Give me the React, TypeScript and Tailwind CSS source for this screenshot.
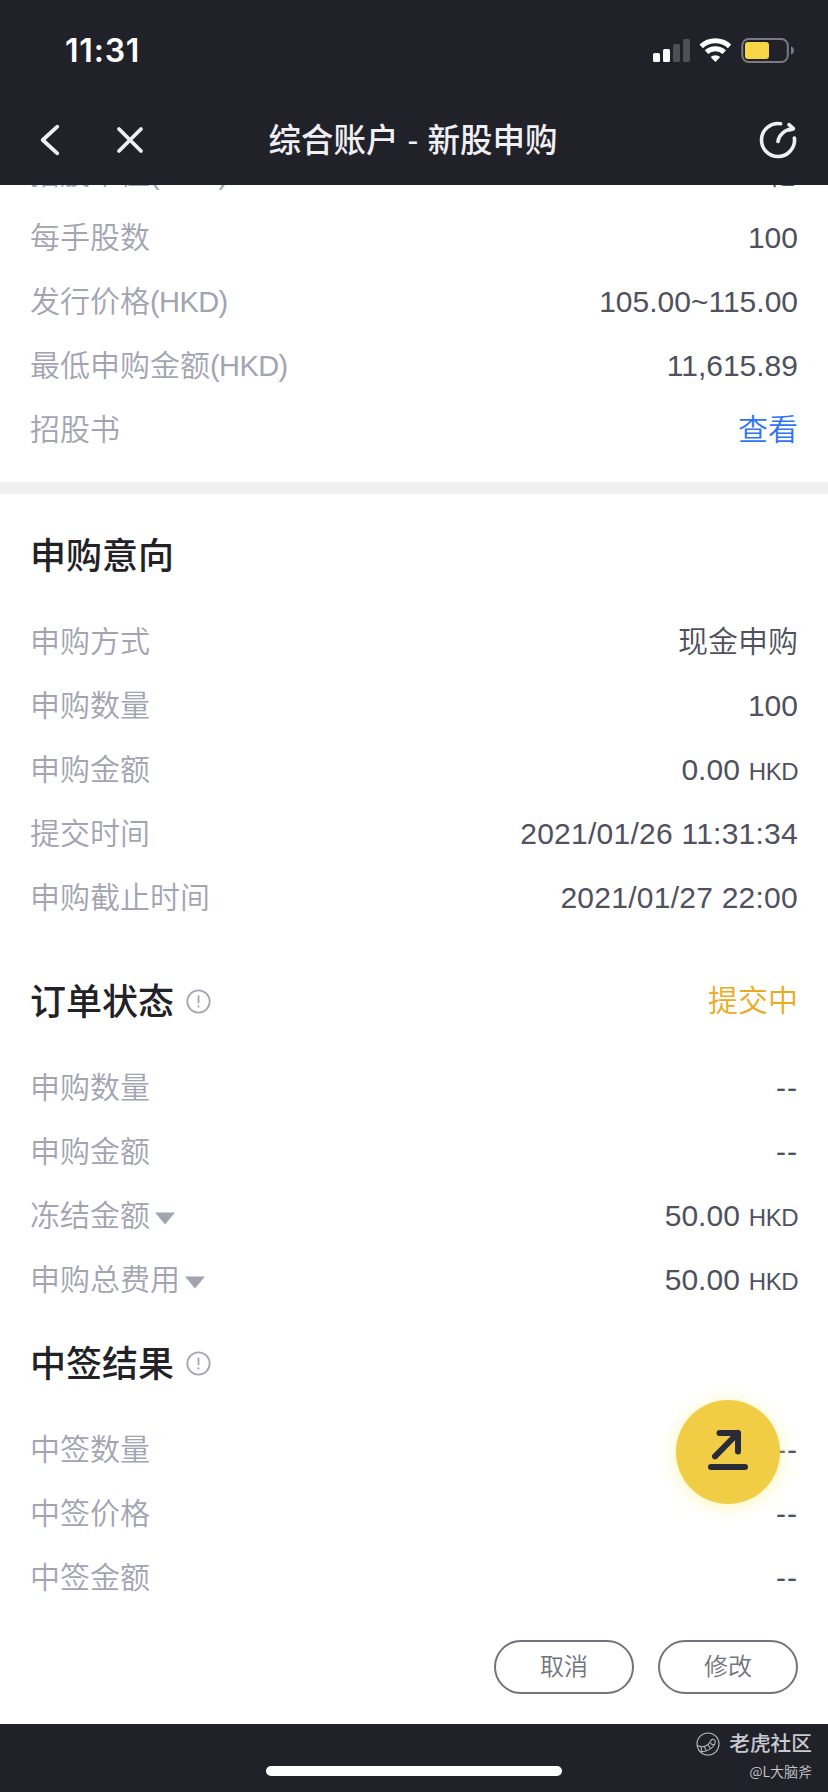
import type { ReactNode } from "react";

type RowData = {
  label: string;
  currency?: string;
  value: string;
  unit?: string;
  kind?: "link" | "date" | "empty" | "money";
  expandable?: boolean;
};

const offerRows: RowData[] = [
  { label: "招股市值", currency: "(HKD)", value: "1.2亿" },
  { label: "每手股数", value: "100" },
  { label: "发行价格", currency: "(HKD)", value: "105.00~115.00" },
  { label: "最低申购金额", currency: "(HKD)", value: "11,615.89" },
  { label: "招股书", value: "查看", kind: "link" },
];

const intentRows: RowData[] = [
  { label: "申购方式", value: "现金申购" },
  { label: "申购数量", value: "100" },
  { label: "申购金额", value: "0.00", unit: "HKD", kind: "money" },
  { label: "提交时间", value: "2021/01/26 11:31:34", kind: "date" },
  { label: "申购截止时间", value: "2021/01/27 22:00", kind: "date" },
];

const orderRows: RowData[] = [
  { label: "申购数量", value: "--", kind: "empty" },
  { label: "申购金额", value: "--", kind: "empty" },
  { label: "冻结金额", value: "50.00", unit: "HKD", kind: "money", expandable: true },
  { label: "申购总费用", value: "50.00", unit: "HKD", kind: "money", expandable: true },
];

const resultRows: RowData[] = [
  { label: "中签数量", value: "--", kind: "empty" },
  { label: "中签价格", value: "--", kind: "empty" },
  { label: "中签金额", value: "--", kind: "empty" },
];

const valueStyles = {
  link: "text-[#2f74f5]",
  date: "text-[#50515e] tracking-[0.25px]",
  empty: "text-[#50515e] tracking-[1px]",
  money: "text-[#50515e] pt-[2px]",
};

function StatusBar() {
  return (
    <div className="flex h-[96px] items-center justify-between pl-[65px] pr-[34px] pt-[3px]">
      <span className="pt-[2px] font-['Inter'] text-[32px] font-semibold leading-none tracking-[0.8px] text-white">
        11:31
      </span>
      <svg width="142" height="26" viewBox="652 36 142 26" fill="none">
        <rect x="653" y="52" width="7" height="9" rx="1.5" fill="#fff" />
        <rect x="663" y="48" width="7" height="13" rx="1.5" fill="#fff" />
        <rect x="673" y="43" width="7" height="18" rx="1.5" fill="#4f4f57" />
        <rect x="683" y="38" width="7" height="23" rx="1.5" fill="#4f4f57" />
        <path
          d="M701.2 45.3A21.2 21.2 0 0 1 729.6 45.3M706.5 51.2A13.3 13.3 0 0 1 724.3 51.2"
          stroke="#fff"
          strokeWidth="5"
        />
        <path d="M715.4 61L710.6 56.1A7 7 0 0 1 720.2 56.1Z" fill="#fff" />
        <rect x="742.3" y="38" width="45.5" height="23" rx="6.5" stroke="#7b7b80" strokeWidth="2" />
        <rect x="745" y="41" width="24" height="17" rx="3" fill="#f7d748" />
        <path d="M791 45.5C795 46.5 795 52.5 791 53.5Z" fill="#7b7b80" />
      </svg>
    </div>
  );
}

function NavBar() {
  return (
    <div className="flex h-[88px] items-center justify-between px-[30px]">
      <div className="flex w-[130px] items-center pl-[8px]">
        <svg width="24" height="34" viewBox="0 0 24 34" fill="none" stroke="#efeff4" strokeWidth="3.8" strokeLinecap="round" strokeLinejoin="round">
          <path d="M19.3 3.7L4.7 17L19.3 30.3" />
        </svg>
        <svg className="ml-[52px]" width="32" height="32" viewBox="0 0 32 32" fill="none" stroke="#efeff4" strokeWidth="3.8" strokeLinecap="round">
          <path d="M5 5L27 27M27 5L5 27" />
        </svg>
      </div>
      <h1 className="mr-[2px] pt-[1px] text-[32.5px] font-medium leading-[44px] text-[#efeff4]">综合账户 - 新股申购</h1>
      <div className="flex w-[130px] justify-end">
        <svg width="40" height="40" viewBox="0 0 40 40" fill="none" stroke="#efeff4" strokeWidth="3.6" strokeLinecap="round" strokeLinejoin="round">
          <path d="M22.6 3.7A16.5 16.5 0 1 0 36.4 18" />
          <path d="M20 21.5C20.8 15.5 26 9.8 35 8.8" />
          <path d="M31 4.7L35.4 8.7L31.5 10" />
        </svg>
      </div>
    </div>
  );
}

function InfoIcon() {
  return (
    <svg className="mb-[3px] ml-[12px]" width="25" height="25" viewBox="0 0 25 25" fill="none" stroke="#a5a6b2" strokeWidth="1.8">
      <circle cx="12.5" cy="12.5" r="11.2" />
      <path d="M12.5 6.5V14.3M12.5 16.5V18.5" />
    </svg>
  );
}

function Row({ label, currency, value, unit, kind, expandable }: RowData) {
  return (
    <div className="flex h-16 items-center justify-between">
      <div className="flex items-center text-[#a3a4b1]">
        <span>{label}</span>
        {currency && <span className="text-[29px] tracking-[-0.6px]">{currency}</span>}
        {expandable && (
          <svg className="ml-[4px] mt-[5px]" width="22" height="13" viewBox="0 0 22 13">
            <path d="M1 0.5H21L11 12.5Z" fill="#a3a4b1" />
          </svg>
        )}
      </div>
      <div className={kind ? valueStyles[kind] : "text-[#50515e]"}>
        {value}
        {unit && <span className="ml-[9px] text-[24px] tracking-[-0.5px]">{unit}</span>}
      </div>
    </div>
  );
}

function Rows({ rows }: { rows: RowData[] }) {
  return (
    <>
      {rows.map((row) => (
        <Row key={row.label} {...row} />
      ))}
    </>
  );
}

function Title({ children, info }: { children: ReactNode; info?: boolean }) {
  return (
    <div className="flex items-center">
      <h2 className="text-[36px] font-medium leading-[50px] text-[#222226]">{children}</h2>
      {info && <InfoIcon />}
    </div>
  );
}

function PillButton({ children }: { children: ReactNode }) {
  return (
    <button className="flex h-[54px] w-[140px] items-center justify-center rounded-full border-2 border-[#72747c] text-[24px] leading-none text-[#72747c]">
      {children}
    </button>
  );
}

function Footer() {
  return (
    <footer className="relative h-[68px] shrink-0 bg-[#202129]">
      <div className="mx-auto h-[68px] w-[296px] pt-[42px]">
        <div className="h-[10px] rounded-full bg-white" />
      </div>
      <div className="absolute right-[16px] top-[6px] flex flex-col items-end text-[#c9cacf]">
        <div className="flex items-center">
          <svg className="mr-[9px]" width="24" height="24" viewBox="0 0 24 24" fill="none" stroke="#b4b5ba" strokeWidth="1.1">
            <circle cx="12" cy="12" r="11" />
            <path d="M1.5 13.5C6 16 12 14.5 14 10C15 7.5 17.5 6 19 8.5C20.5 13 13 20.5 3.5 19.5" />
            <path d="M5 14.8L5.8 19.5M8.5 14.6L10 18.8M12 12.8L14.5 16.8M14.5 10.5C15 13 17 13 18.8 12" />
          </svg>
          <span className="text-[20.7px] font-medium leading-[28px]">老虎社区</span>
        </div>
        <span className="mt-[3px] font-['Noto_Sans_CJK_SC',sans-serif] text-[14px] leading-[20px]">@L大脑斧</span>
      </div>
    </footer>
  );
}

export default function App() {
  return (
    <div className="relative flex h-[1792px] w-[828px] flex-col overflow-hidden bg-white font-['Liberation_Sans','Noto_Sans_CJK_SC',sans-serif] text-[30px] font-[350] leading-[42px]">
      <header className="h-[185px] shrink-0 bg-[#202129]">
        <StatusBar />
        <NavBar />
      </header>

      <main className="h-[1539px] shrink-0 overflow-hidden">
        <section className="-mt-[43px] px-[30px] pb-[20px]">
          <Rows rows={offerRows} />
        </section>

        <div className="h-[12px] bg-[#f1f1f1]" />

        <section className="px-[30px]">
          <div className="flex h-[116px] items-center pt-[10px]">
            <Title>申购意向</Title>
          </div>
          <Rows rows={intentRows} />
        </section>

        <section className="px-[30px]">
          <div className="flex h-[126px] items-center justify-between pt-[19px]">
            <Title info>订单状态</Title>
            <span className="pb-[3px] text-[#ebaa22]">提交中</span>
          </div>
          <Rows rows={orderRows} />
        </section>

        <section className="px-[30px]">
          <div className="flex h-[106px] items-center">
            <Title info>中签结果</Title>
          </div>
          <Rows rows={resultRows} />
        </section>

        <div className="mt-[30px] flex justify-end gap-[24px] px-[30px]">
          <PillButton>取消</PillButton>
          <PillButton>修改</PillButton>
        </div>
      </main>

      <Footer />

      {/* floating action button */}
      <button className="absolute left-[676px] top-[1400px] flex h-[104px] w-[104px] items-center justify-center rounded-full bg-[#f0cd45] shadow-[0_2px_18px_rgba(255,236,120,0.55)]">
        <svg width="48" height="48" viewBox="704 1428 48 48" fill="none" stroke="#2a2b38" strokeWidth="6" strokeLinecap="round" strokeLinejoin="round">
          <path d="M719.5 1433H738V1451.5M738 1433L715 1456.3M711 1467H745" />
        </svg>
      </button>
    </div>
  );
}
